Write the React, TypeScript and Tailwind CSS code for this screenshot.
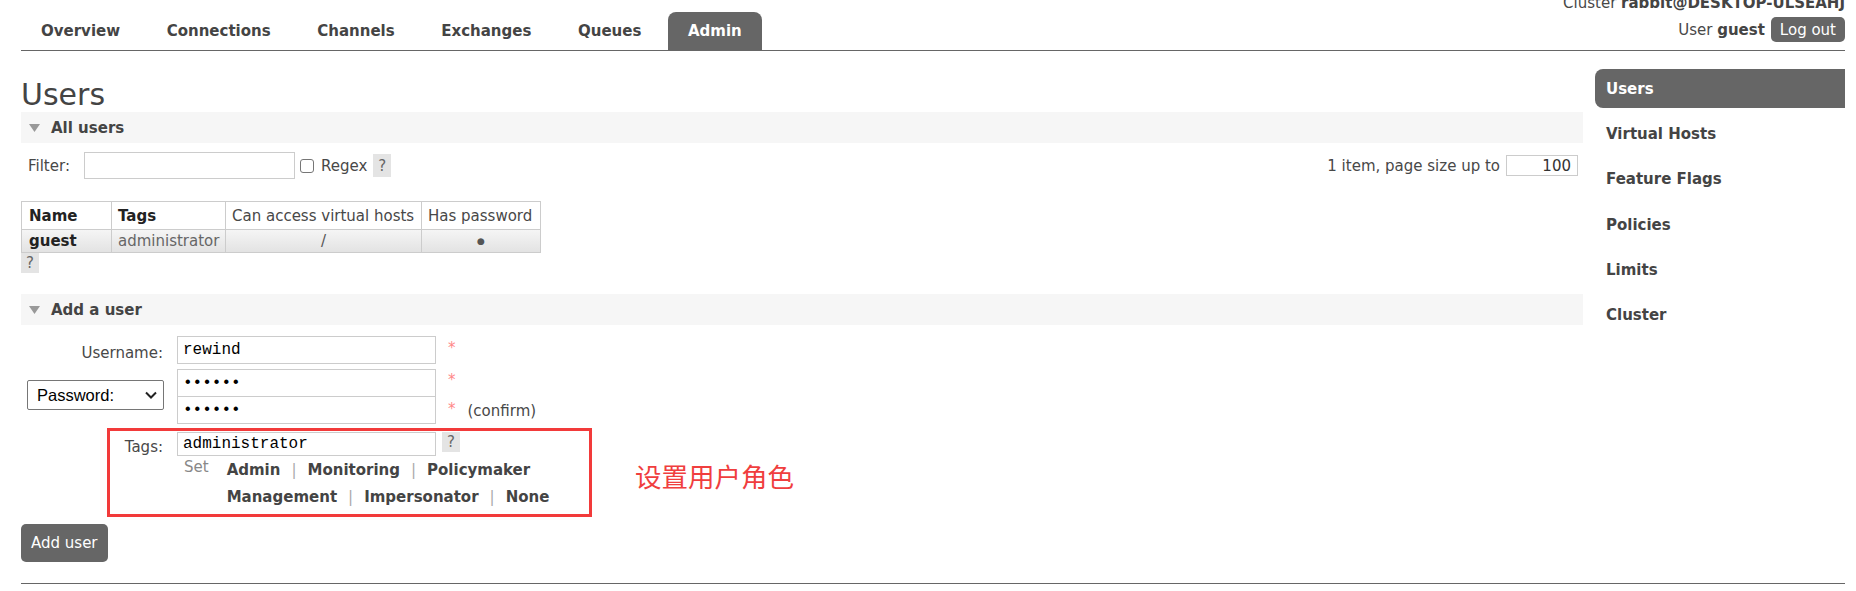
import React from "react";

const tabs = ["Overview", "Connections", "Channels", "Exchanges", "Queues", "Admin"];
const side = ["Users", "Virtual Hosts", "Feature Flags", "Policies", "Limits", "Cluster"];

function Tri() {
  return (
    <svg width="11" height="8" viewBox="0 0 11 8" className="shrink-0">
      <path d="M0 0 H11 L5.5 8 Z" fill="#999" />
    </svg>
  );
}

function Help({ h = 23 }: { h?: number }) {
  return (
    <span
      className={`flex w-[18px] items-center justify-center bg-[#e4e4e4] text-[15px] text-[#666] ${h === 23 ? "h-[23px]" : "h-[20px]"}`}
    >
      ?
    </span>
  );
}

function Bar({ title }: { title: string }) {
  return (
    <div className="flex h-[31px] items-center gap-[11px] bg-[#f6f6f6] pl-[8px] font-bold text-[#444]">
      <Tri />
      <span>{title}</span>
    </div>
  );
}

function Sep() {
  return <span className="mx-[11px] font-normal text-[#aaa]">|</span>;
}

export default function App() {
  return (
    <div className="relative h-[591px] w-[1856px] overflow-hidden whitespace-nowrap bg-white font-['DejaVu_Sans',sans-serif] text-[15px] leading-[18px] text-[#484848]">
      <div className="ml-[21px] mr-[11px]">
        <header className="flex h-[51px] items-end justify-between border-b border-[#666]">
          <nav className="flex gap-[6.6px]">
            {tabs.map((t) => (
              <div
                key={t}
                className={`flex h-[38px] items-center rounded-t-[8px] px-[20px] font-bold ${t === "Admin" ? "bg-[#666] text-white" : "text-[#444]"}`}
              >
                {t}
              </div>
            ))}
          </nav>
          <div className="flex flex-col items-end pb-[8px]">
            <div className="mb-[4px] leading-[20px]">
              Cluster <b className="text-[#444]">rabbit@DESKTOP-ULSEAHJ</b>
            </div>
            <div className="flex h-[25px] items-center gap-[6px]">
              <span>
                User <b className="text-[#444]">guest</b>
              </span>
              <span className="flex h-[25px] items-center rounded-[5px] bg-[#666] px-[9px] text-white">Log out</span>
            </div>
          </div>
        </header>

        <div className="flex gap-[12px]">
          <main className="w-[1562px]">
            <h1 className="mt-[27px] text-[30px] leading-[34px] font-normal text-[#444]">Users</h1>
            <Bar title="All users" />

            <div className="mt-[9px] flex h-[27px] items-center">
              <span className="pl-[7px]">Filter:</span>
              <div className="ml-[14px] h-[27px] w-[211px] border border-[#ccc]" />
              <span className="ml-[5px] h-[14px] w-[14px] rounded-[3px] border border-[#767676]" />
              <span className="ml-[7px]">Regex</span>
              <span className="ml-[6px]">
                <Help />
              </span>
              <div className="ml-auto flex items-center">
                <span>1 item, page size up to</span>
                <div className="ml-[6px] mr-[5px] flex h-[21px] w-[72px] items-center justify-end border border-[#ccc] pr-[6px] text-[#333]">
                  100
                </div>
              </div>
            </div>

            <table className="mt-[22px] w-[519px] table-fixed border-collapse">
              <thead>
                <tr className="h-[28px] bg-white">
                  <th className="w-[90px] border border-[#ccc] px-[7px] text-left font-bold text-[#222]">Name</th>
                  <th className="w-[114px] border border-[#ccc] px-[6px] text-left font-bold text-[#222]">Tags</th>
                  <th className="w-[196px] border border-[#ccc] px-[6px] text-left font-normal">Can access virtual hosts</th>
                  <th className="w-[119px] border border-[#ccc] px-[6px] text-left font-normal">Has password</th>
                </tr>
              </thead>
              <tbody>
                <tr className="h-[23px] bg-gradient-to-b from-[#f5f5f5] to-[#e2e2e2]">
                  <td className="border border-[#ccc] px-[7px] font-bold text-[#222]">guest</td>
                  <td className="border border-[#ccc] px-[6px] text-[#666]">administrator</td>
                  <td className="border border-[#ccc] px-[6px] text-center text-[#555]">/</td>
                  <td className="border border-[#ccc] px-[6px] text-center text-[9px] text-[#555]">●</td>
                </tr>
              </tbody>
            </table>
            <Help h={20} />

            <div className="mt-[21px]">
              <Bar title="Add a user" />
            </div>

            <div className="relative mt-[11px]">
              {/* Username */}
              <div className="flex h-[28px]">
                <div className="w-[156px] pr-[14px] pt-[8px] text-right">Username:</div>
                <div className="flex h-[28px] w-[259px] items-center border border-[#ccc] pl-[5px] font-['Liberation_Mono',monospace] text-[16px] text-black">
                  rewind
                </div>
                <div className="pl-[12px] pt-[3px] text-[#f88]">*</div>
              </div>

              {/* Password */}
              <div className="mt-[5px] flex">
                <div className="flex w-[156px] items-start pl-[6px] pt-[11px]">
                  <div className="flex h-[30px] w-[137px] items-center justify-between rounded-[2px] border border-[#767676] pl-[9px] pr-[6px] font-['Liberation_Sans',sans-serif] text-[16.5px] text-black">
                    <span>Password:</span>
                    <svg width="12" height="8" viewBox="0 0 12 8">
                      <path d="M1 1.5 L6 6.5 L11 1.5" fill="none" stroke="#222" strokeWidth="2" />
                    </svg>
                  </div>
                </div>
                <div className="flex w-[259px] flex-col">
                  <div className="flex h-[28px] items-center border border-[#ccc] pl-[5px] font-['Liberation_Mono',monospace] text-[16px] text-black">
                    ••••••
                  </div>
                  <div className="-mt-px flex h-[28px] items-center border border-[#ccc] pl-[5px] font-['Liberation_Mono',monospace] text-[16px] text-black">
                    ••••••
                  </div>
                </div>
                <div className="flex flex-col pl-[12px]">
                  <div className="h-[28px] pt-[2px] text-[#f88]">*</div>
                  <div className="flex h-[28px] items-start pt-[3px]">
                    <span className="text-[#f88]">*</span>
                    <span className="ml-[12px] pt-[2px]">(confirm)</span>
                  </div>
                </div>
              </div>

              {/* Tags */}
              <div className="mt-[7px] flex">
                <div className="w-[156px] pr-[14px] pt-[6px] text-right">Tags:</div>
                <div className="flex h-[24px] w-[259px] items-center border border-[#ccc] pl-[5px] font-['Liberation_Mono',monospace] text-[16px] text-black">
                  administrator
                </div>
                <div className="ml-[6px]">
                  <Help h={20} />
                </div>
              </div>

              {/* Set links */}
              <div className="mt-[1px] flex pl-[163px]">
                <span className="pt-[1px] text-[#888]">Set</span>
                <div className="ml-[18px] font-bold leading-[27px] text-[#444]">
                  <div>
                    Admin<Sep />Monitoring<Sep />Policymaker
                  </div>
                  <div>
                    Management<Sep />Impersonator<Sep />None
                  </div>
                </div>
              </div>

              <div className="pointer-events-none absolute left-[86px] top-[92px] h-[89px] w-[485px] border-[3px] border-[#f23a3a]" />
              <div className="absolute left-[614px] top-[125px] font-['Noto_Sans_CJK_SC',sans-serif] text-[26.5px] leading-[30px] text-[#f03e3e]">
                设置用户角色
              </div>
            </div>

            <button className="mt-[13px] flex h-[38px] items-center rounded-[5px] bg-[#666] px-[10px] text-white">
              Add user
            </button>
          </main>

          <aside className="flex w-[250px] flex-col gap-[6.4px] pt-[18px]">
            {side.map((s) => (
              <div
                key={s}
                className={`flex h-[39px] items-center pl-[11px] font-bold ${s === "Users" ? "rounded-l-[8px] bg-[#666] text-white" : "text-[#444]"}`}
              >
                {s}
              </div>
            ))}
          </aside>
        </div>

        <div className="mt-[21px] border-t border-[#666]" />
      </div>
    </div>
  );
}
